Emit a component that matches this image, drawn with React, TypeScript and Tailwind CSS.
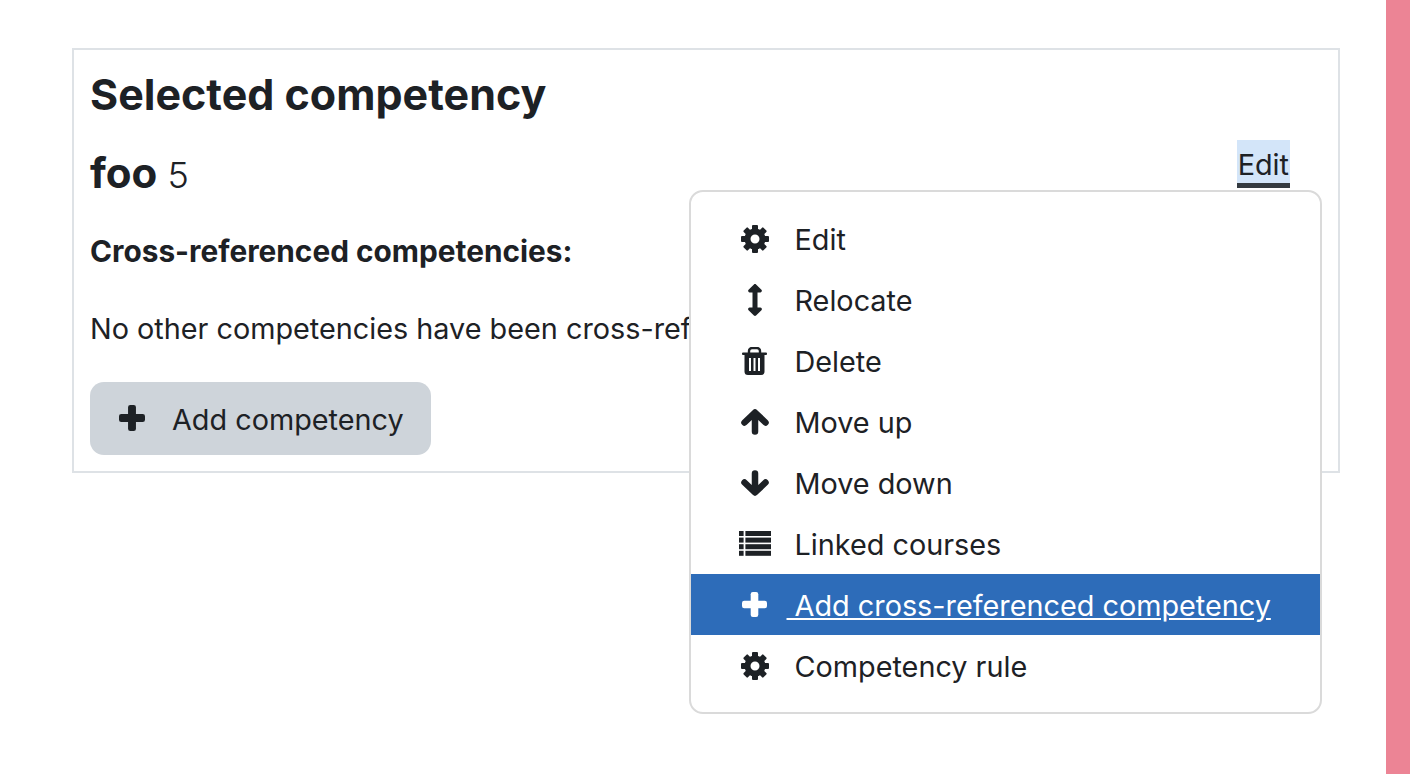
import { FaArrowsAltV } from "react-icons/fa";
import type { ReactNode } from "react";

function CogIcon() {
  return (
    <svg viewBox="0 0 28 28" className="h-[28px] w-[28px]" fill="currentColor">
      {[0, 45, 90, 135, 180, 225, 270, 315].map((angle) => (
        <rect key={angle} x="11" y="0" width="6" height="8" rx="1" transform={`rotate(${angle} 14 14)`} />
      ))}
      <circle cx="14" cy="14" r="7.5" fill="none" stroke="currentColor" strokeWidth="6" />
    </svg>
  );
}

function TrashIcon() {
  return (
    <svg viewBox="0 0 25 28" className="h-[28px] w-[25px]" fill="currentColor">
      <path d="M7 6 V4 a3 3 0 0 1 3-3 h5 a3 3 0 0 1 3 3 V6" fill="none" stroke="currentColor" strokeWidth="2.4" />
      <rect x="0" y="5.5" width="25" height="2.6" rx="1" />
      <path
        fillRule="evenodd"
        d="M2.5 8 H22.5 V24.5 a3.5 3.5 0 0 1-3.5 3.5 H6 a3.5 3.5 0 0 1-3.5-3.5 Z M7 11 V24 H9 V11 Z M11.5 11 V24 H13.5 V11 Z M16 11 V24 H18 V11 Z"
      />
    </svg>
  );
}

function ArrowUpIcon() {
  return (
    <svg viewBox="0 0 28 26" className="h-[26px] w-[28px]" fill="none" stroke="currentColor" strokeWidth="6.5" strokeLinecap="round" strokeLinejoin="round">
      <path d="M14 22.5 V4 M3.5 13.5 L14 3.5 L24.5 13.5" />
    </svg>
  );
}

function ArrowDownIcon() {
  return (
    <svg viewBox="0 0 28 26" className="h-[26px] w-[28px]" fill="none" stroke="currentColor" strokeWidth="6.5" strokeLinecap="round" strokeLinejoin="round">
      <path d="M14 3.5 V22 M3.5 12.5 L14 22.5 L24.5 12.5" />
    </svg>
  );
}

function ListIcon() {
  return (
    <svg viewBox="0 0 32 25" className="h-[25px] w-[32px]" fill="currentColor">
      {[0, 6.6, 13.2, 19.8].map((y) => (
        <g key={y}>
          <rect x="0" y={y} width="4.6" height="5" />
          <rect x="6.4" y={y} width="25.6" height="5" />
        </g>
      ))}
    </svg>
  );
}

function PlusIcon({ size }: { size: number }) {
  return (
    <svg viewBox="0 0 25 25" width={size} height={size} fill="currentColor">
      <rect x="8.7" y="0" width="7.6" height="25" rx="2.2" />
      <rect x="0" y="8.7" width="25" height="7.6" rx="2.2" />
    </svg>
  );
}

const menuItems: { label: string; icon: ReactNode; active?: boolean }[] = [
  { label: "Edit", icon: <CogIcon /> },
  { label: "Relocate", icon: <FaArrowsAltV className="text-[32px]" /> },
  { label: "Delete", icon: <TrashIcon /> },
  { label: "Move up", icon: <ArrowUpIcon /> },
  { label: "Move down", icon: <ArrowDownIcon /> },
  { label: "Linked courses", icon: <ListIcon /> },
  { label: "Add cross-referenced competency", icon: <PlusIcon size={25} />, active: true },
  { label: "Competency rule", icon: <CogIcon /> },
];

export default function App() {
  return (
    <div className="flex h-[774px] overflow-hidden bg-white font-['Inter',sans-serif] text-[#1d2125]">
      <main className="flex-1 pl-[72px] pr-[46px] pt-[48px]">
        <section className="relative h-[425px] border-2 border-[#dee2e6] pl-[16px] pr-[48px]">
          <h2 className="mt-[14px] text-[43px] leading-[60px] font-bold">Selected competency</h2>
          <div className="mt-[22px] flex items-start justify-between">
            <h3 className="mt-[3px] text-[42px] leading-[48px]">
              <span className="font-bold">foo</span>
              <span className="text-[36px] font-light"> 5</span>
            </h3>
            <a className="-mt-[6px] block h-[48px] border-b-[5px] border-[#343a40] bg-[#d3e5f9] px-[1px] pt-[5px] text-[28.8px] leading-[40px]">
              Edit
            </a>
          </div>
          <p className="mt-[32px] text-[29.8px] leading-[40px] font-bold">Cross-referenced competencies:</p>
          <p className="mt-[38px] text-[28.8px] leading-[40px]">
            No other competencies have been cross-referenced to this competency.
          </p>
          <button className="mt-[33px] flex h-[73px] w-[341px] items-center rounded-[14px] bg-[#ced4da] pl-[29px] text-[28.8px]">
            <span className="-mt-[2px]">
              <PlusIcon size={26} />
            </span>
            <span className="mt-[2px] ml-[27px]">Add competency</span>
          </button>

          <ul className="absolute top-[140px] left-[615px] h-[524px] w-[633px] rounded-[14px] border-2 border-[#dadada] bg-white pt-[16px]">
            {menuItems.map((item) => (
              <li
                key={item.label}
                className={
                  item.active
                    ? "flex h-[61px] items-center bg-[#2d6cb9] text-white"
                    : "flex h-[61px] items-center"
                }
              >
                <span className="flex w-[103.5px] justify-center pl-[24px]">{item.icon}</span>
                {item.active ? (
                  <span className="mt-[2px] -ml-[8px] text-[28.8px] leading-[40px] underline">{"\u00a0" + item.label}</span>
                ) : (
                  <span className="mt-[2px] text-[28.8px] leading-[40px]">{item.label}</span>
                )}
              </li>
            ))}
          </ul>
        </section>
      </main>
      <div className="h-full w-[24px] bg-[#ec8495]" />
    </div>
  );
}
